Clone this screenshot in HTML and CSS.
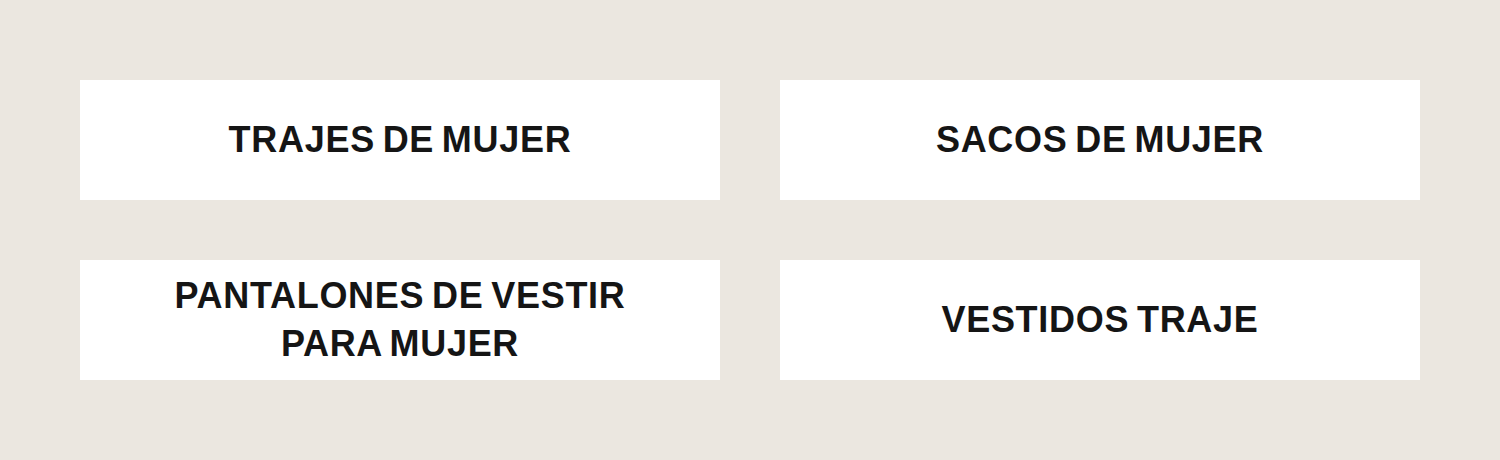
FILE: index.html
```html
<!DOCTYPE html>
<html lang="es">
<head>
<meta charset="utf-8">
<link rel="stylesheet" href="styles.css">
</head>
<body>
<main class="grid">
  <a class="card" href="#">TRAJES DE MUJER</a>
  <a class="card" href="#">SACOS DE MUJER</a>
  <a class="card" href="#">PANTALONES DE VESTIR<br>PARA MUJER</a>
  <a class="card" href="#">VESTIDOS TRAJE</a>
</main>
</body>
</html>
```
FILE: styles.css
```css
html, body {
  margin: 0;
  padding: 0;
  background: #ebe7e0;
}
.grid {
  display: grid;
  grid-template-columns: 640px 640px;
  grid-auto-rows: 120px;
  gap: 60px;
  padding: 80px;
}
.card {
  background: #ffffff;
  display: flex;
  align-items: center;
  justify-content: center;
  text-align: center;
  text-decoration: none;
  color: #151515;
  font-family: "Liberation Sans", Arial, sans-serif;
  font-weight: 700;
  font-size: 36px;
  line-height: 48px;
  letter-spacing: 0.02em;
  word-spacing: -3px;
}
```
